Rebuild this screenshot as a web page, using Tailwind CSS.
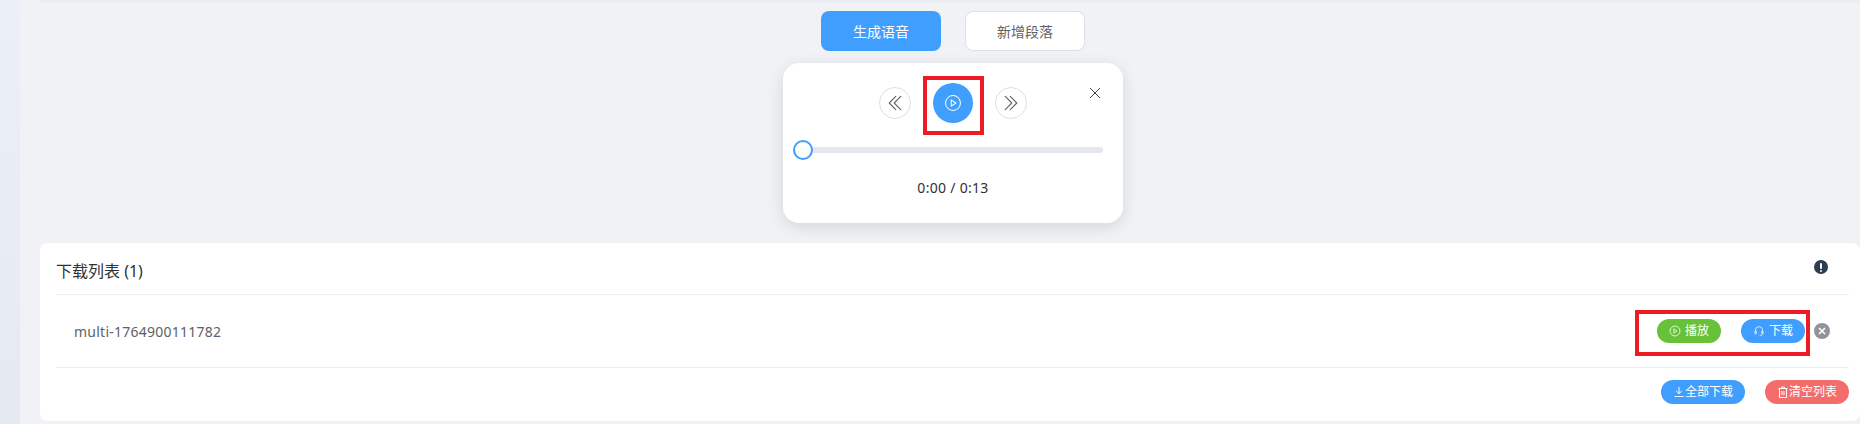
<!DOCTYPE html>
<html lang="zh">
<head>
<meta charset="utf-8">
<script src="https://cdn.jsdelivr.net/npm/@tailwindcss/browser@4"></script>
</head>
<body class="m-0 h-[424px] w-[1860px] overflow-hidden bg-[#f0f2f6] font-['Noto_Sans','Noto_Sans_CJK_SC',sans-serif]">
<div class="flex h-[424px] w-full">
  <aside class="h-full w-[20px] shrink-0 bg-gradient-to-b from-[#eaeff8] to-[#e4e9f2]"></aside>
  <main class="relative flex min-w-0 flex-1 flex-col pl-[20px]">
    <div class="h-[3px] bg-gradient-to-b from-[#ebecf0] to-[#eef0f4]"></div>
    <div class="flex flex-col items-center pl-[6px]">
      <div class="mt-[8px] flex justify-center gap-[24px]">
        <button class="h-[40px] w-[120px] rounded-[8px] bg-[#409eff] text-[14px] text-white">生成语音</button>
        <button class="h-[40px] w-[120px] rounded-[8px] border border-[#dcdfe6] bg-white text-[14px] text-[#606266]">新增段落</button>
      </div>
      <div class="relative mt-[12px] h-[160px] w-[340px] rounded-[16px] bg-white pt-[24px] shadow-[0_4px_16px_rgba(0,0,0,0.12)]">
        <div class="flex h-[32px] items-center justify-center gap-[22px]">
          <span class="flex h-[32px] w-[32px] items-center justify-center rounded-full border border-[#dcdfe6] text-[#606266]">
            <svg class="h-[20px] w-[20px]" viewBox="0 0 1024 1024" fill="currentColor"><path d="M529.408 149.376a29.12 29.12 0 0 1 41.728 0 30.592 30.592 0 0 1 0 42.688L259.264 511.936l311.872 319.936a30.592 30.592 0 0 1-.512 43.264 29.12 29.12 0 0 1-41.216-.512L197.76 534.272a32 32 0 0 1 0-44.672l331.648-340.224zm256 0a29.12 29.12 0 0 1 41.728 0 30.592 30.592 0 0 1 0 42.688L515.264 511.936l311.872 319.936a30.592 30.592 0 0 1-.512 43.264 29.12 29.12 0 0 1-41.216-.512L453.76 534.272a32 32 0 0 1 0-44.672l331.648-340.224z"/></svg>
          </span>
          <span class="flex h-[40px] w-[40px] items-center justify-center rounded-full bg-[#409eff] text-white">
            <svg class="h-[18px] w-[18px]" viewBox="0 0 16 16" fill="none" stroke="currentColor" stroke-width="0.9"><circle cx="8" cy="8" r="6.6"/><path d="M6.4 5.2 10.6 8l-4.2 2.8z" stroke-linejoin="round"/></svg>
          </span>
          <span class="flex h-[32px] w-[32px] items-center justify-center rounded-full border border-[#dcdfe6] text-[#606266]">
            <svg class="h-[20px] w-[20px]" viewBox="0 0 1024 1024" fill="currentColor"><path d="M452.864 149.312a29.12 29.12 0 0 1 41.728.064L826.24 489.664a32 32 0 0 1 0 44.672L494.592 874.624a29.12 29.12 0 0 1-41.728 0 30.592 30.592 0 0 1 0-42.752L764.736 512 452.864 192a30.592 30.592 0 0 1 0-42.688zm-256 0a29.12 29.12 0 0 1 41.728.064L570.24 489.664a32 32 0 0 1 0 44.672L238.592 874.624a29.12 29.12 0 0 1-41.728 0 30.592 30.592 0 0 1 0-42.752L508.736 512 196.864 192a30.592 30.592 0 0 1 0-42.688z"/></svg>
          </span>
        </div>
        <svg class="absolute right-[21px] top-[23px] h-[14px] w-[14px] text-[#303133]" viewBox="0 0 14 14" fill="none" stroke="currentColor" stroke-width="0.9"><path d="M2 2l10 10M12 2 2 12"/></svg>
        <div class="relative ml-[10px] mr-[20px] mt-[28px] h-[6px] rounded-[3px] bg-[#e4e7ed]">
          <span class="absolute left-0 top-[-7px] h-[20px] w-[20px] rounded-full border-2 border-[#409eff] bg-white"></span>
        </div>
        <p class="mt-[24px] text-center text-[14px] leading-[22px] tracking-[0.3px] text-[#303133]">0:00 / 0:13</p>
      </div>
    </div>
    <section class="mt-[20px] h-[178px] rounded-[8px] bg-white pl-[16px] pr-[11px]">
      <div class="flex h-[52px] items-center justify-between border-b border-[#ebeef5] pt-[4px]">
        <h2 class="text-[16px] font-normal text-[#303133]">下载列表 (1)</h2>
        <span class="mb-[7px] mr-[21px] flex h-[14px] w-[14px] flex-col items-center justify-center gap-[1px] rounded-full bg-[#2c3e50]">
          <span class="h-[6px] w-[2px] rounded-[1px] bg-white"></span>
          <span class="h-[2px] w-[2px] rounded-[1px] bg-white"></span>
        </span>
      </div>
      <div class="flex h-[73px] items-center border-b border-[#ebeef5] pl-[18px]">
        <span class="flex-1 text-[14px] tracking-[0.25px] text-[#606266]">multi-1764900111782</span>
        <button class="flex h-[24px] w-[64px] items-center justify-center gap-[4px] rounded-full bg-[#67c23a] text-[12px] text-white">
          <svg class="h-[12px] w-[12px]" viewBox="0 0 16 16" fill="none" stroke="currentColor"><circle cx="8" cy="8" r="6.6"/><path d="M6.4 5.2 10.6 8l-4.2 2.8z" stroke-linejoin="round"/></svg>播放
        </button>
        <button class="ml-[20px] flex h-[24px] w-[64px] items-center justify-center gap-[4px] rounded-full bg-[#409eff] text-[12px] text-white">
          <svg class="h-[12px] w-[12px]" viewBox="0 0 16 16" fill="none" stroke="currentColor"><path d="M3.2 10V7a4.8 4.8 0 0 1 9.6 0v3"/><rect x="2.5" y="8" width="2" height="4" rx="1"/><rect x="11.5" y="8" width="2" height="4" rx="1"/><path d="M12.5 12c0 1.4-1.6 2.2-3.5 2.2"/></svg>下载
        </button>
        <span class="ml-[9px] mr-[19px] flex h-[16px] w-[16px] items-center justify-center rounded-full bg-[#909399] text-white">
          <svg class="h-[8px] w-[8px]" viewBox="0 0 8 8" fill="none" stroke="currentColor" stroke-width="1.6"><path d="M1 1l6 6M7 1 1 7"/></svg>
        </span>
      </div>
      <div class="flex justify-end gap-[20px] pt-[12px]">
        <button class="flex h-[24px] w-[84px] items-center justify-center rounded-full bg-[#409eff] text-[12px] text-white">
          <svg class="h-[12px] w-[12px]" viewBox="0 0 12 12" fill="none" stroke="currentColor"><path d="M6 1v6.5M3.2 5 6 7.7 8.8 5M1.5 10.5h9"/></svg>全部下载
        </button>
        <button class="flex h-[24px] w-[84px] items-center justify-center rounded-full bg-[#f56c6c] text-[12px] text-white">
          <svg class="h-[12px] w-[12px]" viewBox="0 0 12 12" fill="none" stroke="currentColor"><path d="M1.5 2.5h9M4.5 2.5V1h3v1.5M2.5 2.5v9h7v-9M5 5v4M7 5v4"/></svg>清空列表
        </button>
      </div>
    </section>
    <div class="pointer-events-none absolute left-[903px] top-[76px] h-[59px] w-[61px] border-[4px] border-[#ed1c24]"></div>
    <div class="pointer-events-none absolute left-[1615px] top-[310px] h-[46px] w-[175px] border-[4px] border-[#ed1c24]"></div>
  </main>
</div>
</body>
</html>
